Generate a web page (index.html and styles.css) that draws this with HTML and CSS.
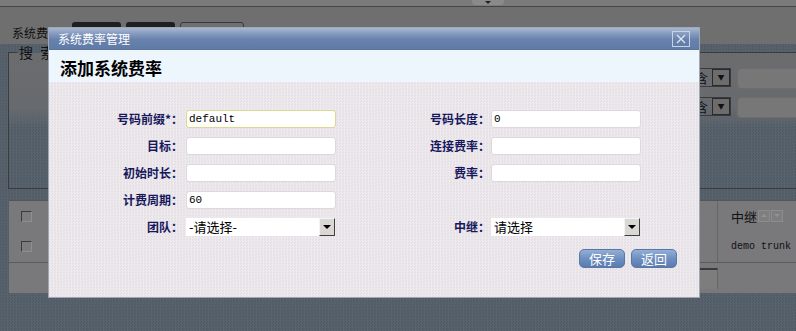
FILE: index.html
```html
<!DOCTYPE html>
<html lang="zh-CN">
<head>
  <meta charset="UTF-8" />
  <title>系统费率管理</title>
  <link rel="stylesheet" href="styles.css">
</head>
<body>
  <!-- 页面（遮罩下） -->
  <div class="page">
    <div class="topbar"><span class="topbar-tab"></span></div>
    <div class="toolbar">
      <span class="page-title">系统费率：</span>
      <span class="tool-btn">添加</span>
      <span class="tool-btn">删除</span>
      <span class="tool-select">搜 索<i>&#9660;</i></span>
    </div>
    <fieldset class="search">
      <legend>搜 索</legend>
      <div class="search-form">
        <div class="search-row"><span class="bg-select">包含<b>&#9660;</b></span><span class="bg-input"></span></div>
        <div class="search-row"><span class="bg-select">包含<b>&#9660;</b></span><span class="bg-input"></span></div>
      </div>
    </fieldset>
    <div class="list">
      <div class="list-row">
        <span class="cell-check"><i class="check"></i></span>
        <span class="cell-fill"></span>
        <span class="cell-trunk">中继<i class="sort up"></i><i class="sort down"></i></span>
      </div>
      <div class="list-row">
        <span class="cell-check"><i class="check"></i></span>
        <span class="cell-fill"></span>
        <span class="cell-trunk mono">demo trunk</span>
      </div>
      <div class="list-pager"><span class="pager-fill"></span><span class="pager-box"></span></div>
    </div>
  </div>

  <!-- 弹出窗口 -->
  <div class="dialog">
    <div class="dialog-bar">
      <span class="dialog-title">系统费率管理</span>
      <span class="dialog-close">
        <svg width="10" height="10" viewBox="0 0 10 10"><path d="M1 1L9 9M9 1L1 9" stroke="#dfe7f3" stroke-width="1.3"/></svg>
      </span>
    </div>
    <div class="dialog-head">添加系统费率</div>
    <div class="dialog-body">
      <div class="form-grid">
        <label class="lbl">号码前缀*：</label><input class="field focused" value="default">
        <label class="lbl lbl-r">号码长度：</label><input class="field" value="0">

        <label class="lbl">目标：</label><input class="field" value="">
        <label class="lbl lbl-r">连接费率：</label><input class="field" value="">

        <label class="lbl">初始时长：</label><input class="field" value="">
        <label class="lbl lbl-r">费率：</label><input class="field" value="">

        <label class="lbl">计费周期：</label><input class="field" value="60">
        <span></span><span></span>

        <label class="lbl">团队：</label><span class="select">-请选择-<b class="arrow"></b></span>
        <label class="lbl lbl-r">中继：</label><span class="select">请选择<b class="arrow"></b></span>
      </div>
      <div class="actions">
        <span class="btn">保存</span>
        <span class="btn">返回</span>
      </div>
    </div>
  </div>
</body>
</html>
```

FILE: styles.css
```css
/* 基本 */
body {
  margin: 0;
  width: 796px;
  height: 331px;
  overflow: hidden;
  position: relative;
  font-family: "Noto Sans CJK SC", sans-serif;
  font-size: 12px;
  background-color: #56606a;
  background-image: repeating-conic-gradient(#59636d 0 25%, #515b65 0 50%);
  background-size: 3px 3px;
}
.mono {
  font-family: "Liberation Mono", "DejaVu Sans Mono", monospace;
}

/* 遮罩下的页面 */
.topbar {
  height: 6px;
  background: #7b7b7b;
  border-bottom: 1px solid #454545;
  display: flex;
  padding-left: 472px;
}
.topbar-tab {
  width: 32px;
  height: 5px;
  background: #8a8a8a;
  border-radius: 0 0 4px 4px;
  display: flex;
  justify-content: center;
  padding-top: 1px;
  box-sizing: border-box;
}
.topbar-tab::after {
  content: "";
  border-left: 3px solid transparent;
  border-right: 3px solid transparent;
  border-top: 3px solid #222;
  height: 0;
}
.toolbar {
  height: 37px;
  background: #6f6f6f;
  display: flex;
  align-items: flex-start;
  padding: 15px 0 0 12px;
  box-sizing: border-box;
  gap: 5px;
}
.page-title {
  color: #111;
  font-size: 12px;
  line-height: 20px;
  margin-top: 1px;
  width: 55px;
  white-space: nowrap;
}
.tool-btn {
  width: 49px;
  height: 22px;
  background: #1f1f1f;
  border-radius: 3px 3px 0 0;
  color: #555;
  text-align: center;
  line-height: 22px;
}
.tool-select {
  width: 64px;
  height: 20px;
  border: 1px solid #3a3a3a;
  border-radius: 3px;
  color: #111;
  font-size: 14px;
  line-height: 20px;
  padding-left: 5px;
  box-sizing: border-box;
  position: relative;
}
.tool-select i {
  font-style: normal;
  font-size: 8px;
  position: absolute;
  right: 4px;
  top: 0;
}
.search {
  margin: 0 0 0 8px;
  padding: 0;
  height: 145px;
  box-sizing: border-box;
  border: 1px solid #3b3b3b;
  border-right: none;
  background: linear-gradient(#6b6c6e 0, #676a6e 55px, rgba(100,106,112,0) 75px);
}
.search legend {
  margin-left: 8px;
  padding: 0 2px;
  color: #111;
  font-size: 14px;
  line-height: 16px;
  letter-spacing: 2px;
}
.search-form {
  display: flex;
  flex-direction: column;
  gap: 10px;
  padding: 8px 0 0 650px;
}
.search-row {
  display: flex;
  gap: 6px;
  height: 19px;
}
.bg-select {
  width: 72px;
  height: 19px;
  box-sizing: border-box;
  border: 1px solid #3a3a3a;
  color: #111;
  font-size: 13px;
  line-height: 17px;
  display: flex;
  justify-content: space-between;
  padding-left: 22px;
}
.bg-select b {
  width: 16px;
  background: #6c6c6c;
  border: 1px solid #2a2a2a;
  font-size: 7px;
  text-align: center;
  line-height: 15px;
  font-weight: normal;
}
.bg-input {
  width: 100px;
  height: 19px;
  background: #777;
  border-radius: 4px;
  border: 1px solid #6d6d6d;
}
.list {
  margin: 11px 0 0 9px;
  height: 93px;
  background: #79787b;
  border-top: 1px solid #555;
  box-sizing: border-box;
}
.list-row {
  display: flex;
  height: 30px;
}
.list-row + .list-row {
  height: 31px;
  border-bottom: 1px solid #5c5c5c;
}
.cell-check {
  width: 38px;
  display: flex;
  align-items: center;
  padding-left: 12px;
  box-sizing: border-box;
}
.check {
  width: 9px;
  height: 9px;
  border: 1px solid #3a3a3a;
  border-right-color: #8e8e8e;
  border-bottom-color: #8e8e8e;
  background: #7c7c7c;
}
.cell-fill {
  flex: 1;
}
.cell-trunk {
  width: 79px;
  border-left: 1px solid #666;
  display: flex;
  align-items: center;
  padding-left: 13px;
  box-sizing: border-box;
  color: #111;
  font-size: 13px;
  white-space: nowrap;
}
.cell-trunk.mono {
  font-size: 10px;
}
.sort {
  width: 10px;
  height: 10px;
  background: #7e7e7e;
  border: 1px solid #8c8c8c;
  margin-left: 1px;
  position: relative;
}
.sort::after {
  content: "";
  position: absolute;
  left: 2px;
  top: 3px;
  border-left: 3px solid transparent;
  border-right: 3px solid transparent;
}
.sort.up::after {
  border-bottom: 3px solid #929292;
}
.sort.down::after {
  border-top: 3px solid #929292;
}
.list-pager {
  display: flex;
  height: 31px;
}
.pager-fill {
  flex: 1;
}
.pager-box {
  width: 19px;
  height: 19px;
  margin: 5px 78px 0 0;
  border-top: 2px solid #3a3a3a;
  border-right: 1px solid #666;
  background: #7d7d7d;
}

/* 弹出窗口 */
.dialog {
  position: absolute;
  left: 48px;
  top: 27px;
  width: 652px;
  height: 271px;
  box-sizing: border-box;
  border: 1px solid #9ea7b6;
  display: flex;
  flex-direction: column;
}
.dialog-bar {
  height: 21px;
  background: linear-gradient(#a7b7d0, #8298bd 30%, #6882ad 55%, #5f7ba7);
  border-bottom: 1px solid #5d7399;
  display: flex;
  align-items: center;
  justify-content: space-between;
  padding: 0 9px 0 9px;
}
.dialog-title {
  color: #fff;
  font-size: 12px;
  line-height: 20px;
}
.dialog-close {
  width: 16px;
  height: 14px;
  border: 1px solid #c7d3e6;
  display: flex;
  align-items: center;
  justify-content: center;
  margin-top: 1px;
}
.dialog-head {
  height: 32px;
  box-sizing: border-box;
  background: #eef6fd;
  padding: 5px 0 0 11px;
  font-size: 17px;
  font-weight: 700;
  line-height: 26px;
  color: #000;
}
.dialog-body {
  flex: 1;
  background-color: #ebe7eb;
  background-image: repeating-conic-gradient(#eeeaee 0 25%, #e4e0e5 0 50%);
  background-size: 3px 3px;
  padding-top: 28px;
}
.form-grid {
  display: grid;
  grid-template-columns: 137px 150px 155px 150px;
  grid-auto-rows: 18px;
  row-gap: 9px;
  align-items: center;
}
.lbl {
  text-align: right;
  padding-right: 3px;
  color: #17175c;
  font-weight: 700;
  font-size: 12px;
  line-height: 18px;
  white-space: nowrap;
}
.lbl-r {
  padding-right: 1px;
}
.field {
  width: 150px;
  height: 18px;
  box-sizing: border-box;
  margin: 0;
  padding: 0 2px;
  border: 1px solid #dcd8dc;
  border-radius: 3px;
  background: #fff;
  font-family: "Liberation Mono", "DejaVu Sans Mono", monospace;
  font-size: 11px;
  color: #000;
  outline: none;
}
.field.focused {
  border-color: #ddd88f;
}
.select {
  width: 149px;
  height: 18px;
  box-sizing: border-box;
  background: #fff;
  display: flex;
  align-items: center;
  justify-content: space-between;
  padding-left: 3px;
  font-size: 13px;
  line-height: 18px;
  color: #000;
}
.arrow {
  width: 16px;
  height: 18px;
  box-sizing: border-box;
  background: #dad8d4;
  border: 1px solid;
  border-color: #f4f4f4 #404040 #404040 #f4f4f4;
  position: relative;
}
.arrow::after {
  content: "";
  position: absolute;
  left: 3px;
  top: 6px;
  border-left: 4px solid transparent;
  border-right: 4px solid transparent;
  border-top: 4px solid #000;
}
.actions {
  display: flex;
  justify-content: flex-end;
  gap: 6px;
  margin-top: 13px;
  padding-right: 22px;
}
.btn {
  width: 46px;
  height: 19px;
  box-sizing: border-box;
  border: 1px solid #5877a5;
  border-radius: 5px;
  background: linear-gradient(#93afd6, #6e8fc0 50%, #5a7bb0);
  color: #fff;
  font-size: 13px;
  line-height: 17px;
  text-align: center;
}
```
